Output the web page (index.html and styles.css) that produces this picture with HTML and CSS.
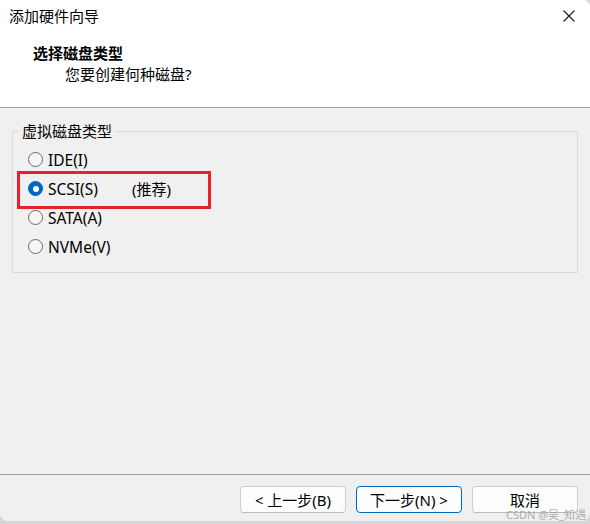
FILE: index.html
```html
<!DOCTYPE html>
<html lang="zh-CN">
<head>
<meta charset="utf-8">
<title>添加硬件向导</title>
<link rel="stylesheet" href="styles.css">
</head>
<body>
<div class="window">
  <header class="header">
    <div class="titlebar">
      <span class="title">添加硬件向导</span>
      <span class="close"><svg width="12" height="12" viewBox="0 0 12 12"><path d="M0.5 0.5 L11.5 11.5 M11.5 0.5 L0.5 11.5" stroke="#1a1a1a" stroke-width="1.1" fill="none"/></svg></span>
    </div>
    <div class="heading">
      <div class="h1">选择磁盘类型</div>
      <div class="h2">您要创建何种磁盘?</div>
    </div>
  </header>
  <main class="content">
    <fieldset class="group">
      <legend class="legend">虚拟磁盘类型</legend>
      <div class="opt"><span class="radio"></span><span class="lbl">IDE(I)</span></div>
      <div class="opt hl"><span class="radio checked"></span><span class="lbl">SCSI(S)</span><span class="rec">(推荐)</span><span class="mark"></span></div>
      <div class="opt"><span class="radio"></span><span class="lbl">SATA(A)</span></div>
      <div class="opt"><span class="radio"></span><span class="lbl">NVMe(V)</span></div>
    </fieldset>
  </main>
  <footer class="footer">
    <button class="btn">&lt; 上一步(B)</button>
    <button class="btn default">下一步(N) &gt;</button>
    <button class="btn">取消</button>
  </footer>
</div>
<div class="watermark">CSDN @吴_知遇</div>
</body>
</html>
```

FILE: styles.css
```css
html, body {
  margin: 0;
  padding: 0;
}
body {
  width: 590px;
  height: 524px;
  background: #d6d6d6;
  font-family: "Noto Sans", "Noto Sans CJK SC", sans-serif;
  font-size: 15px;
  color: #000;
  position: relative;
  overflow: hidden;
}
.window {
  width: 590px;
  height: 521px;
  display: flex;
  flex-direction: column;
  background: #f0f0f0;
  border-top-right-radius: 7px;
  border-bottom-left-radius: 8px;
  border-bottom-right-radius: 8px;
  overflow: hidden;
}
.header {
  height: 107px;
  background: #fff;
  border-bottom: 1px solid #a0a0a0;
  flex: none;
}
.titlebar {
  height: 32px;
  display: flex;
  align-items: center;
  justify-content: space-between;
  padding: 0 15px 0 9px;
}
.title {
  line-height: 20px;
  font-family: "Noto Sans CJK SC", sans-serif;
}
.close {
  display: flex;
  width: 12px;
  height: 12px;
}
.heading {
  padding-top: 11px;
}
.h1 {
  padding-left: 33px;
  font-weight: bold;
  line-height: 21px;
}
.h2 {
  padding-left: 65px;
  line-height: 21px;
}
.content {
  flex: 1;
  padding: 13px 12px 0 12px;
}
.group {
  margin: 0;
  border: 1px solid #dcdcdc;
  padding: 4px 0 11px 6px;
}
.legend {
  padding: 0 3px;
  line-height: 20px;
}
.opt {
  position: relative;
  height: 29px;
  display: flex;
  align-items: center;
  padding-left: 9px;
  line-height: 20px;
}
.lbl {
  font-size: 15.5px;
}
.radio {
  width: 15px;
  height: 15px;
  box-sizing: border-box;
  border: 1px solid #6a6a6a;
  border-radius: 50%;
  background: #f6f6f6;
  margin-right: 5px;
  flex: none;
  display: flex;
  align-items: center;
  justify-content: center;
}
.radio.checked {
  border-color: #0067c0;
  background: #0067c0;
}
.radio.checked::after {
  content: "";
  width: 6px;
  height: 6px;
  border-radius: 50%;
  background: #fff;
}
.rec {
  margin-left: 34px;
}
.mark {
  position: absolute;
  left: -2px;
  top: -3px;
  width: 194px;
  height: 38px;
  box-sizing: border-box;
  border: 3px solid #e8202a;
}
.footer {
  flex: none;
  height: 47px;
  border-top: 1px solid #a0a0a0;
  display: flex;
  justify-content: flex-end;
  align-items: flex-start;
  gap: 10px;
  padding: 11px 12px 0 0;
  box-sizing: border-box;
}
.btn {
  width: 106px;
  height: 27px;
  box-sizing: border-box;
  border: 1px solid #d0d0d0;
  border-bottom-color: #bcbcbc;
  border-radius: 4px;
  background: #fdfdfd;
  font-family: "Noto Sans", "Noto Sans CJK SC", sans-serif;
  font-size: 15px;
  color: #000;
  padding: 0;
  line-height: 20px;
}
.btn.default {
  border-color: #0067c0;
}
.watermark {
  position: absolute;
  right: 4px;
  bottom: 2px;
  font-size: 11px;
  line-height: 14px;
  color: rgba(150, 150, 150, 0.75);
  font-family: "Noto Sans", "Noto Sans CJK SC", sans-serif;
}
```
